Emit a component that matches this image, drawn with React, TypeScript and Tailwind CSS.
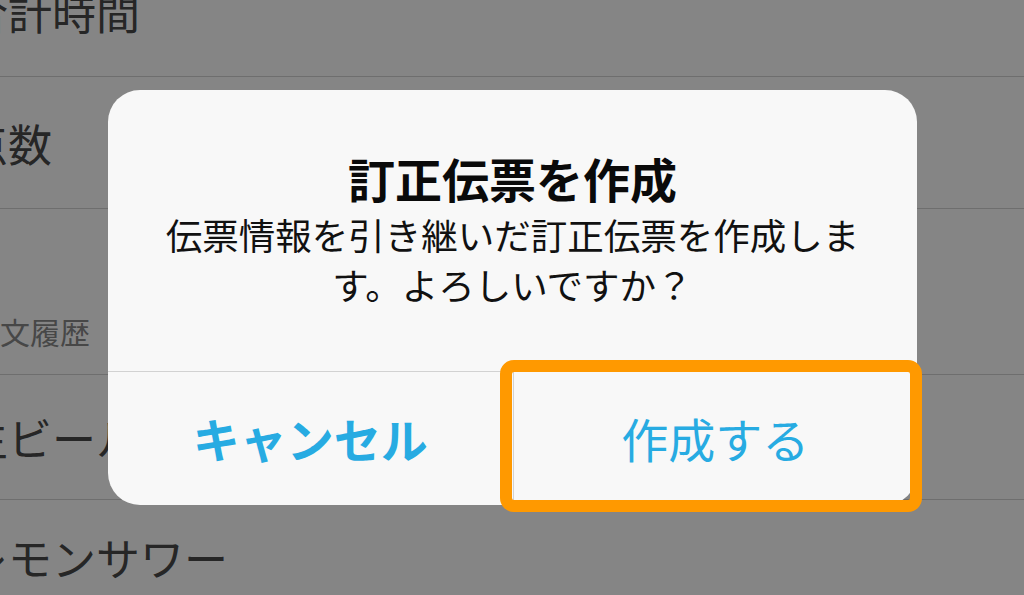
const FONT = "font-['Noto_Sans_CJK_JP','Noto_Sans',sans-serif]";

const ROWS = [
  { key: "time", label: "合計時間", className: "h-[132px] -mt-[55px]" },
  { key: "count", label: "点数", className: "h-[132px]" },
  { key: "beer", label: "生ビール", className: "h-[125px]" },
  { key: "sour", label: "レモンサワー", className: "h-[115px]" },
] as const;

function ListRow({ label, className }: { label: string; className: string }) {
  return (
    <div className={`flex items-center border-b border-[#6e6e6e] ${className}`}>
      <span className="-ml-[36px] whitespace-nowrap text-[44px] leading-[56px] text-[#262626]">{label}</span>
    </div>
  );
}

function ConfirmDialog() {
  return (
    <div className="absolute left-[108px] top-[90px] flex w-[809px] flex-col overflow-hidden rounded-[32px] bg-[#f8f8f8]">
      <div className="flex flex-col items-center px-[50px] pt-[60px] pb-[61px] text-center">
        <h2 className="text-[47px] font-bold leading-[56px] text-[#0a0a0a]">訂正伝票を作成</h2>
        <p className="mt-[4px] text-[36.5px] leading-[50px] text-[#111]">
          伝票情報を引き継いだ訂正伝票を作成します。よろしいですか？
        </p>
      </div>
      <div className="grid h-[134px] grid-cols-2 border-t border-[#d2d2d2]">
        <button className="flex items-center justify-center text-[47px] font-bold text-[#27abe2]">キャンセル</button>
        <button className="flex items-center justify-center border-l border-[#d2d2d2] text-[47px] text-[#27abe2]">
          作成する
        </button>
      </div>
    </div>
  );
}

export default function App() {
  const [first, second, ...rest] = ROWS;
  return (
    <div className={`relative h-[595px] w-[1024px] overflow-hidden bg-[#858585] ${FONT}`}>
      <ListRow label={first.label} className={first.className} />
      <ListRow label={second.label} className={second.className} />
      <div className="flex h-[166px] items-end border-b border-[#6e6e6e] pb-[23px]">
        <span className="-ml-[30px] whitespace-nowrap text-[30px] leading-[40px] text-[#474747]">注文履歴</span>
      </div>
      {rest.map((row) => (
        <ListRow key={row.key} label={row.label} className={row.className} />
      ))}

      <ConfirmDialog />

      {/* highlight frame round the confirm button */}
      <div className="pointer-events-none absolute left-[500px] top-[360px] h-[152px] w-[422px] rounded-[14px] border-[12px] border-[#ff9900]" />
    </div>
  );
}
